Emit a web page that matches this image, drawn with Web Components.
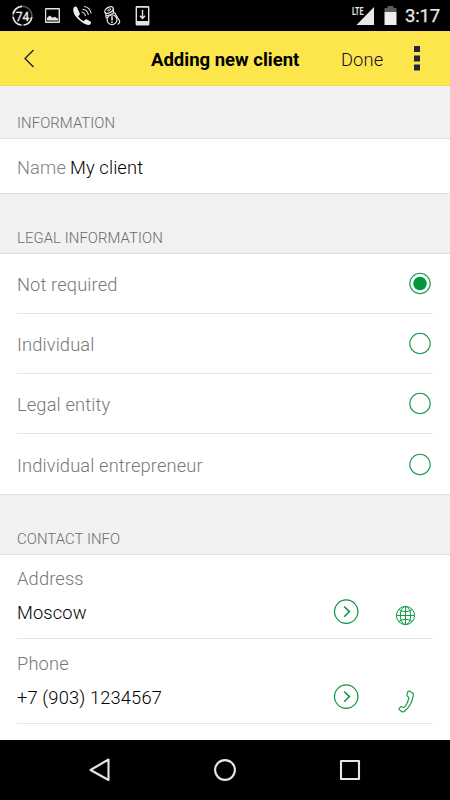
<!DOCTYPE html>
<html lang="en"><head><meta charset="utf-8"><title>Adding new client</title>
<style>html,body{margin:0;height:100%;overflow:hidden;background:#fff;font-family:Roboto,"Liberation Sans",sans-serif}</style></head>
<body><client-screen></client-screen>
<script>
function define(name, markup, setup) {
  customElements.define(name, class extends HTMLElement {
    constructor() {
      super();
      this.attachShadow({mode: 'open'}).innerHTML = markup;
    }
    connectedCallback() { if (setup) setup(this, this.shadowRoot); }
  });
}
define('status-bar', `<style>
:host{display:flex;height:31px;background:#000;color:#e8e8e8;flex:none}
svg{display:block}
.time{font-size:18.500px;line-height:31px;height:31px;width:36px;margin-left:4px;font-weight:400;-webkit-text-stroke:.25px #e8e8e8;letter-spacing:-.2px;white-space:nowrap;padding-top:1px;box-sizing:border-box}
</style>
<svg width="160" height="31" fill="none" stroke="#e4e4e4">
<circle cx="22.5" cy="15.7" r="9.4" stroke="#555" stroke-width="1.6"/>
<path d="M22 6.3A9.4 9.4 0 0 0 13.1 14M13.1 17A9.4 9.4 0 0 0 21 25M24 25A9.4 9.4 0 0 0 31.8 17" stroke-width="1.7"/>
<text x="22.4" y="20.500" text-anchor="middle" font-size="13.500" textLength="13.500" lengthAdjust="spacingAndGlyphs" fill="#eee" stroke="#eee" stroke-width=".3">74</text>
<path fill="#e4e4e4" stroke="none" fill-rule="evenodd" d="M46 8h13q1 0 1 1v13q0 1-1 1h-13q-1 0-1-1V9q0-1 1-1zm.2 1.4v12.200h12.400V9.400z"/>
<path fill="#e4e4e4" stroke="none" d="M47 20.500v-2.500l2.500-2.500 3.200 2.200 2-1 3.300 2v1.800z"/>
<path fill="#eee" stroke="none" d="M75.300 6.600q-1.600.5-2.100 2.300-.5 4.500 4.600 9.800 6 6 10.800 6.400 1.900-.3 2.400-2.200.3-.9-.6-1.400l-3.800-2.200q-.8-.3-1.500.4l-1.500 1.600q-3.600-1.800-5.600-5l1.600-1.600q.5-.5.1-1.400l-2.700-5.900q-.6-1-1.700-.8z"/>
<path stroke-width="1.100" d="M81.500 12q3.100.3 4 4M82.500 9.300q4.800.3 5.900 5.700M84 6.500q6 .6 7.200 7"/>
<g stroke-width="1.200"><ellipse cx="109.100" cy="10" rx="4.700" ry="2.700" transform="rotate(-28 109.1 10)"/><ellipse cx="109.300" cy="9.800" rx="1.800" ry=".7" stroke-width=".8" transform="rotate(-28 109.3 9.8)"/>
<path d="M104.900 12.300l1.400 3.200q4 .6 7.400-2.800l-.7-4.400M106 15.500q-.6 1.500.8 2.900M113.700 12.700q2 .5 2.300 2.300l3.600 6q.5 2-2 3.500"/>
<circle cx="112" cy="19.700" r="4.900"/></g><path d="M112 16.300v4.100M112 21.600v1.500" stroke-width="1.600"/>
<path fill="#e4e4e4" stroke="none" fill-rule="evenodd" d="M137 6h11q1.400 0 1.400 1.400v16.800q0 1.400-1.400 1.400h-11q-1.400 0-1.400-1.400V7.400Q135.600 6 137 6zm0 1.700v13.200h11V7.700z"/>
<path stroke-width="1.400" d="M142.500 10v8M140 15.800l2.500 2.600 2.500-2.600"/>
</svg>
<svg width="50" height="31" style="margin-left:191px">
<text x=".9" y="14.800" font-size="10.500" font-weight="700" textLength="11.500" lengthAdjust="spacingAndGlyphs" fill="#e4e4e4">LTE</text>
<path fill="#e8e8e8" d="M5.500 25L23 7v18z"/><path fill="#5c5c5c" d="M33.500 12V8h3V6h6v2h3v4z"/><path fill="#eee" d="M33.500 12h12v13h-12z"/></svg>
<div class="time">3:17</div>`);

define('app-header', `<style>
:host{display:grid;grid-template-columns:151px 190px 72px 1fr;height:55px;background:#fde64b;align-items:center;box-sizing:border-box;flex:none;border-bottom:1px solid #efdb55;color:#000}
svg{display:block}.back{padding-left:22px}b{font-size:18.500px;line-height:24px;padding-top:3px;white-space:nowrap}
span{font-size:18.300px;line-height:24px;padding-top:3px;color:#10102a;font-weight:300;letter-spacing:.13px}
</style><div class="back"><svg width="16" height="22" fill="none" stroke="#1b1b2b" stroke-width="1.300"><path d="M11.500 3L3 11.500 11.500 20"/></svg></div>
<b><slot></slot></b><span>Done</span>
<svg width="12" height="28"><path fill="#25253a" d="M1 2h6v6H1zM1 11.500h6v6H1zM1 20.500h6v6H1z"/></svg>`);

define('form-section', `<style>
:host{display:block;flex:none}
h2{margin:0;box-sizing:border-box;height:var(--head,60px);display:flex;align-items:flex-end;padding:0 17px 6px;background:#f1f1f1;border-bottom:1px solid #dedede;color:#6c6c6c;font-size:14.900px;line-height:18px;font-weight:300;letter-spacing:.07px}
.body{border-bottom:1px solid #dedede;background:#fff}:host([open-ended]) .body{border:0}
</style><h2></h2><div class="body"><slot></slot></div>`,
(el, root) => root.querySelector('h2').textContent = el.getAttribute('heading'));

define('name-field', `<style>
:host{display:flex;box-sizing:border-box;height:54px;align-items:center;gap:4px;padding:2px 17px 0;font-size:18.300px;color:#808080;font-weight:300;letter-spacing:.13px}
::slotted(span){color:#000}</style><label>Name</label><slot></slot>`);

define('radio-row', `<style>
:host{display:flex;height:60px;box-sizing:border-box;margin:0 17px;align-items:center;justify-content:space-between;border-bottom:1px solid #e5e5e5;font-size:18.300px;font-weight:300;letter-spacing:.13px;color:#787878}
:host([last]){border:0}
svg{margin-right:2px}.t{padding-top:2px}circle{fill:none;stroke:#159b4c;stroke-width:1.100}.dot{fill:#05963f;stroke:none;display:none}:host([checked]) .dot{display:block}
</style><span class="t"><slot></slot></span><svg width="23" height="23"><circle cx="12" cy="11.500" r="10.200"/><circle class="dot" cx="12" cy="11.500" r="6.800"/></svg>`);

const icons = {
  globe: '<svg width="23" height="23" fill="none" stroke="#159b4c"><circle cx="11.500" cy="11.500" r="9.100"/><ellipse cx="11.500" cy="11.500" rx="5.200" ry="9.100"/><path d="M11.500 2.400v18.200M2.400 11.500h18.200M4.700 5.500q6.800 4.400 13.600 0M4.700 17.500q6.800-4.400 13.600 0"/></svg>',
  phone: '<svg width="23" height="24" fill="none" stroke="#159b4c" stroke-width="1.200" stroke-linejoin="round"><path d="M14 2.400q1-.7 2.300.2l2.600 1.600q.8.600.3 2.800-.7 4.500-3 8.700-2.400 4-6 6.800-1.500.8-2.700-.1l-2.300-1.800q-.6-.8.100-1.500l1.200-1.100q.9-.8 2-.1l1 .6q.7.100 1.300-.6 3-4 4-8.500.2-1-.5-1.500l-.8-.6q-.9-.8-.5-1.900z"/></svg>'
};
define('contact-row', `<style>
:host{display:grid;grid-template:31px 37px / 316px 62px 1fr;box-sizing:border-box;height:85px;margin:0 17px;padding-top:9px;border-bottom:1px solid #e5e5e5;font-size:18.300px;font-weight:300;letter-spacing:.15px;line-height:32px}
:host([icon=globe]){height:84px;padding-top:8px}
label{grid-column:1/4;color:#787878}.value{padding-top:3px;color:#000}
svg{display:block}.go{padding-top:4px}.icon{padding-top:10px;margin-left:-1px}
</style><label></label><div class="value"><slot></slot></div>
<div class="go"><svg width="26" height="27" fill="none" stroke="#05963f"><circle cx="13.200" cy="13.600" r="11.700" stroke-width="1.200"/><path d="M11.200 8.500l5.200 5.100-5.200 5.200" stroke-width="1.500"/></svg></div><div class="icon"></div>`,
(el, root) => {
  root.querySelector('label').textContent = el.getAttribute('label');
  root.querySelector('.icon').innerHTML = icons[el.getAttribute('icon')];
});

define('nav-bar', `<style>:host{display:flex;justify-content:space-between;align-items:center;height:60px;flex:none;background:#000;padding:0 87px;box-sizing:border-box}svg{fill:none;stroke:#e6e6e6;stroke-width:2.100;stroke-linejoin:round}</style>
<svg width="26" height="26"><path d="M21.500 2.500v20.500L3.500 13z"/></svg><svg width="26" height="26"><circle cx="13" cy="13" r="9.900"/></svg><svg width="26" height="26"><path d="M4 4h18v18H4z"/></svg>`);

define('client-screen', `<style>:host{display:flex;flex-direction:column;height:800px;width:450px}main{flex:1;min-height:0;overflow:hidden}.first{--head:53px}</style>
<status-bar></status-bar><app-header>Adding new client</app-header>
<main><form-section class="first" heading="INFORMATION"><name-field><span>My client</span></name-field></form-section>
<form-section heading="LEGAL INFORMATION"><radio-row checked>Not required</radio-row><radio-row>Individual</radio-row><radio-row>Legal entity</radio-row><radio-row last>Individual entrepreneur</radio-row></form-section>
<form-section open-ended heading="CONTACT INFO"><contact-row label="Address" icon="globe">Moscow</contact-row><contact-row label="Phone" icon="phone">+7 (903) 1234567</contact-row></form-section></main>
<nav-bar></nav-bar>`);
</script></body></html>
